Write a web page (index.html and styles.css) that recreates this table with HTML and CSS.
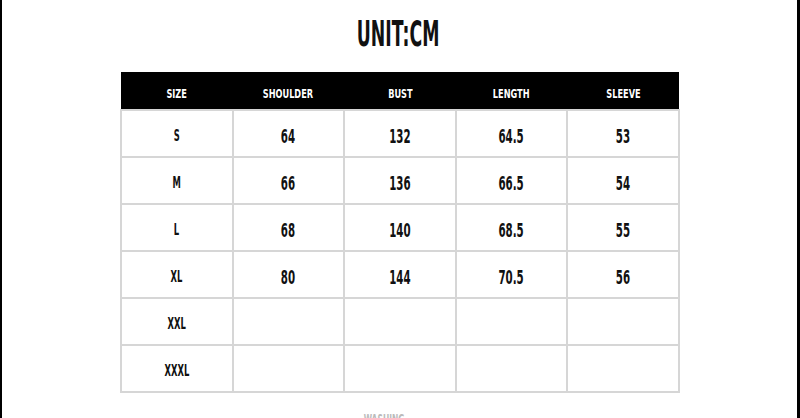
FILE: index.html
```html
<!DOCTYPE html>
<html>
<head>
<meta charset="utf-8">
<link rel="stylesheet" href="styles.css">
</head>
<body>
<div class="page">
  <h1 class="title"><span class="sq">UNIT:CM</span></h1>
  <table class="sizes">
    <thead>
      <tr>
        <th><span class="sq">SIZE</span></th>
        <th><span class="sq">SHOULDER</span></th>
        <th><span class="sq">BUST</span></th>
        <th><span class="sq">LENGTH</span></th>
        <th><span class="sq">SLEEVE</span></th>
      </tr>
    </thead>
    <tbody>
      <tr><td class="sz"><span class="sq">S</span></td><td><span class="sq">64</span></td><td><span class="sq">132</span></td><td><span class="sq">64.5</span></td><td><span class="sq">53</span></td></tr>
      <tr><td class="sz"><span class="sq">M</span></td><td><span class="sq">66</span></td><td><span class="sq">136</span></td><td><span class="sq">66.5</span></td><td><span class="sq">54</span></td></tr>
      <tr><td class="sz"><span class="sq">L</span></td><td><span class="sq">68</span></td><td><span class="sq">140</span></td><td><span class="sq">68.5</span></td><td><span class="sq">55</span></td></tr>
      <tr><td class="sz"><span class="sq">XL</span></td><td><span class="sq">80</span></td><td><span class="sq">144</span></td><td><span class="sq">70.5</span></td><td><span class="sq">56</span></td></tr>
      <tr><td class="sz"><span class="sq">XXL</span></td><td></td><td></td><td></td><td></td></tr>
      <tr><td class="sz"><span class="sq">XXXL</span></td><td></td><td></td><td></td><td></td></tr>
    </tbody>
  </table>
  <div class="next"><span class="sq">WASHING</span></div>
</div>
</body>
</html>
```
FILE: styles.css
```css
html, body {
  margin: 0;
  padding: 0;
  background: #fff;
}
body {
  width: 800px;
  height: 418px;
  overflow: hidden;
  box-sizing: border-box;
  border-left: 2px solid #000;
  border-right: 3px solid #000;
  font-family: "DejaVu Sans Condensed", "DejaVu Sans", sans-serif;
  font-weight: bold;
  color: #111;
}
.page {
  padding-top: 14px;
}
.sq {
  display: inline-block;
  transform: scaleX(0.6);
  transform-origin: center;
  white-space: nowrap;
}
.title {
  margin: 0 0 18px 0;
  font-size: 35px;
  line-height: 40px;
  text-align: center;
  font-weight: bold;
  margin-left: -2px;
}
.title .sq {
  transform: scaleX(0.55);
}
.sizes {
  margin-left: 118px;
  width: 560px;
  table-layout: fixed;
  border-collapse: collapse;
}
.sizes th {
  background: #000;
  color: #fff;
  height: 38px;
  padding: 0;
  font-size: 13px;
  font-weight: bold;
  border: 0;
  vertical-align: middle;
  padding-top: 6px;
  box-sizing: border-box;
}
.sizes th .sq {
  transform: scaleX(0.7);
}
.sizes td {
  border: 2px solid #d6d6d6;
  height: 47px;
  padding: 0;
  text-align: center;
  vertical-align: middle;
  font-size: 19px;
  padding-top: 5px;
  box-sizing: border-box;
}
.sizes td .sq {
  transform: scaleX(0.6);
}
.sizes td.sz {
  font-size: 15px;
}
.sizes td.sz .sq {
  transform: scaleX(0.62);
}
.next {
  margin-top: 18px;
  text-align: center;
  color: #bbb;
  font-size: 14px;
  margin-left: -30px;
}
```
